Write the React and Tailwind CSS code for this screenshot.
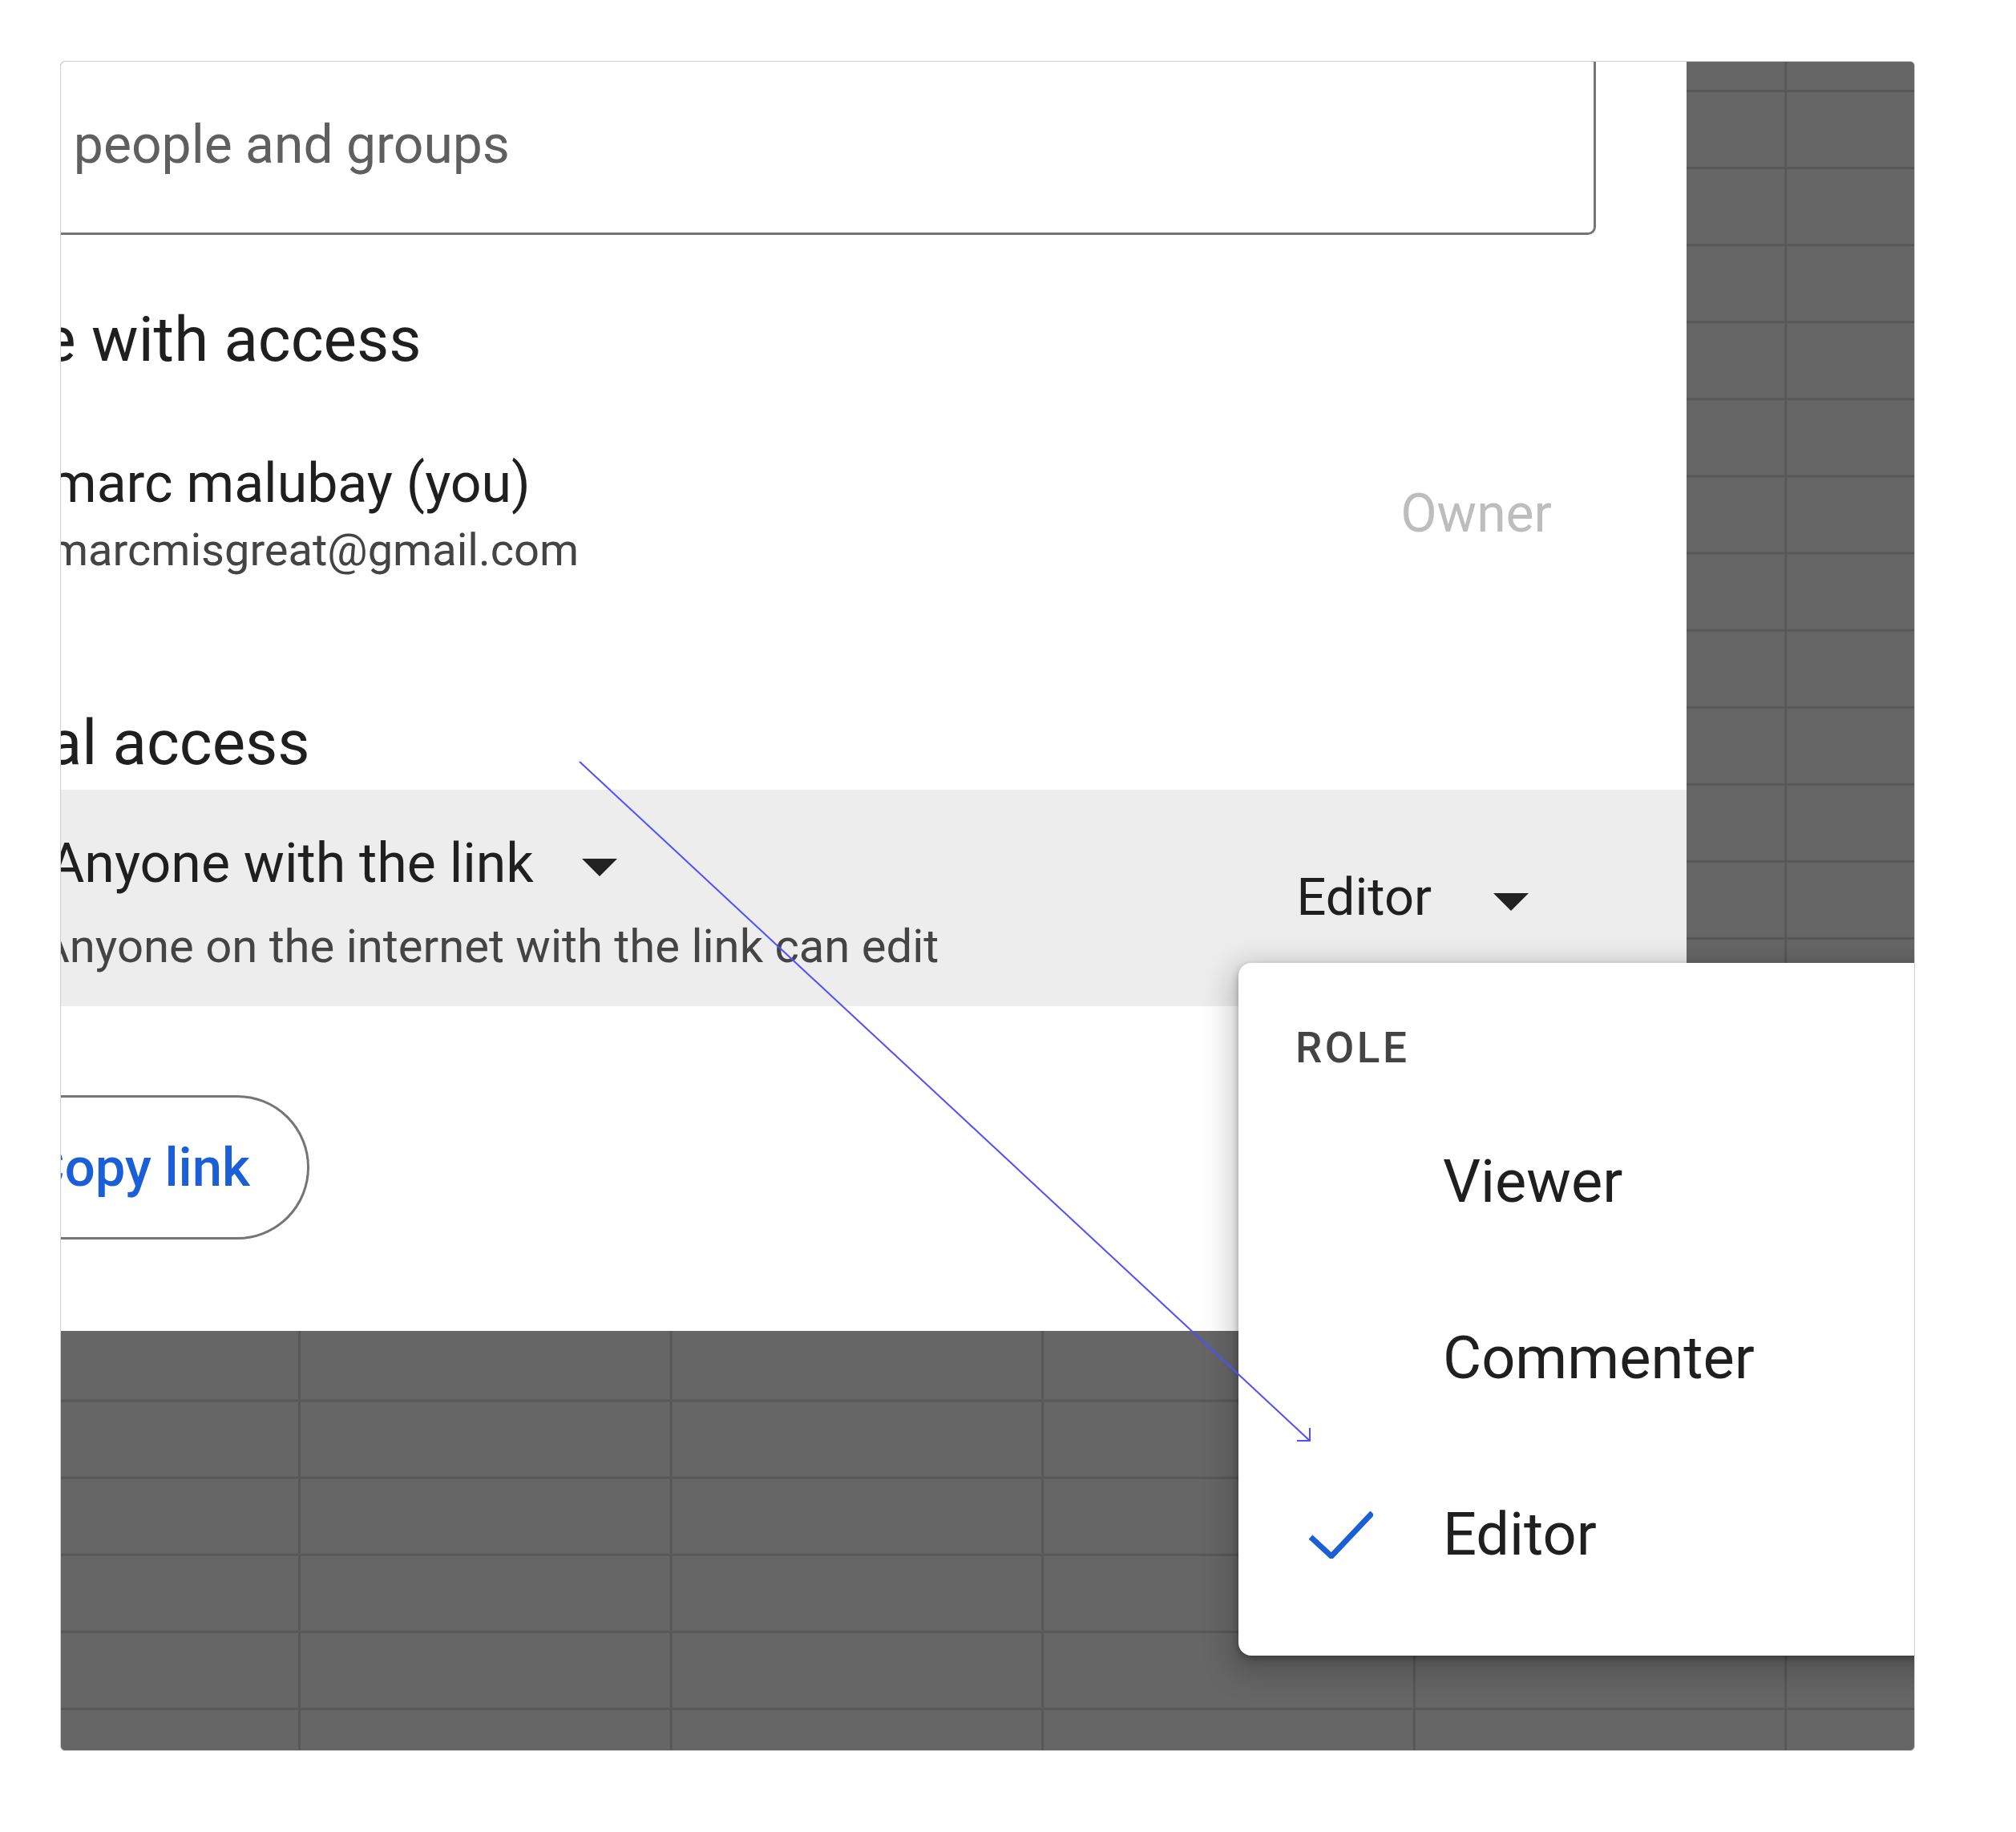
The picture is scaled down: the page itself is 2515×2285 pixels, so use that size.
import React from 'react';

// --- small drop-down caret (material arrow_drop_down) ---
const Caret = ({ className }) => (
    <svg viewBox="0 0 44 22" className={className}>
        <polygon points="0,0 44,0 22,22" fill="#222222" />
    </svg>
);

const Check = () => (
    <svg viewBox="0 0 80 60" className="w-[80px] h-[60px]">
        <polyline points="2,33 28,57 79,3" fill="none" stroke="#1b5ed6" strokeWidth="7" />
    </svg>
);

const roles = [
    { name: 'Viewer', checked: false },
    { name: 'Commenter', checked: false },
    { name: 'Editor', checked: true },
];

// --- role menu that floats over the dialog ---
const RoleMenu = () => (
    <div className="absolute left-[1469px] top-[1124px] w-[1000px] h-[864px] bg-white rounded-[16px] shadow-[0_12px_36px_12px_rgba(0,0,0,0.18),0_4px_10px_rgba(0,0,0,0.3)] pt-[80px]">
        <div className="pl-[71px] text-[53px] leading-none tracking-[3.5px] font-medium text-[#444444]">ROLE</div>
        <div className="mt-[30px]">
            {roles.map((r) => (
                <div key={r.name} className="h-[220px] flex items-center pl-[88px]">
                    <div className="w-[80px] h-[60px]">{r.checked && <Check />}</div>
                    <span className="ml-[87px] text-[74px] leading-none text-[#1f1f1f]">{r.name}</span>
                </div>
            ))}
        </div>
    </div>
);

export default function App() {
    return (
        <div className="w-[2515px] h-[2285px] bg-white pt-[76px] pl-[75px] font-[Roboto,sans-serif]">
            {/* Frame with the sheet grid behind the dialog */}
            <div className="relative w-[2314px] h-[2108px] border border-[#cfcfcf] rounded-[6px] overflow-hidden bg-[#666666] bg-[linear-gradient(to_right,#585858_3px,transparent_3px),linear-gradient(to_bottom,#585858_3px,transparent_3px)] bg-size-[463.6px_96.1px] bg-position-[296px_35px]">
                {/* Share dialog */}
                <div className="w-[2028px] h-[1583px] bg-white overflow-hidden">
                    <div className="ml-[-220px] w-[2248px] flex flex-col">
                        {/* Search input */}
                        <div className="mt-[-20px] w-[2135px] h-[236px] border-[3px] border-[#757575] rounded-[10px] pl-[99px] pt-[88px] text-[66px] leading-none text-[#5f5f5f]">
                            Add people and groups
                        </div>

                        <h2 className="mt-[92px] text-[78px] leading-none text-[#1f1f1f]">People with access</h2>

                        {/* Owner row */}
                        <div className="mt-[106px] flex justify-between pr-[168px]">
                            <div className="pl-[205px]">
                                <div className="text-[68px] leading-none text-[#1f1f1f]">marc malubay (you)</div>
                                <div className="mt-[21px] text-[56px] leading-none text-[#444444]">marcmisgreat@gmail.com</div>
                            </div>
                            <div className="mt-[39px] text-[66px] leading-none text-[#bdbdbd]">Owner</div>
                        </div>

                        <h2 className="mt-[174px] text-[78px] leading-none text-[#1f1f1f]">General access</h2>

                        {/* General access row */}
                        <div className="mt-[19px] h-[270px] bg-[#ededed] flex justify-between pl-[205px] pr-[197px]">
                            <div className="pt-[58px]">
                                <div className="flex items-start">
                                    <span className="text-[68px] leading-none text-[#1f1f1f]">Anyone with the link</span>
                                    <Caret className="ml-[60px] mt-[28px] w-[44px] h-[22px]" />
                                </div>
                                <div className="mt-[40px] -ml-[12px] text-[58px] leading-none text-[#444444]">Anyone on the internet with the link can edit</div>
                            </div>
                            <div className="flex items-start pt-[102px]">
                                <span className="text-[65px] leading-none text-[#1f1f1f]">Editor</span>
                                <Caret className="ml-[77px] mt-[27px] w-[44px] h-[22px]" />
                            </div>
                        </div>

                        {/* Copy link */}
                        <div className="mt-[111px] w-[530px] h-[180px] border-[3px] border-[#757575] rounded-full flex items-center pl-[178px] text-[67px] leading-none font-medium text-[#1a5fd7]">
                            Copy link
                        </div>
                    </div>
                </div>

                <RoleMenu />

                {/* Annotation arrow */}
                <svg className="absolute inset-0 w-full h-full pointer-events-none" viewBox="0 0 2312 2106">
                    <line x1="647" y1="873" x2="1558" y2="1720" stroke="#4f4fff" strokeWidth="2" />
                    <polyline points="1542,1720 1558,1720 1558,1704" fill="none" stroke="#4f4fff" strokeWidth="2" />
                </svg>
            </div>
        </div>
    );
}
